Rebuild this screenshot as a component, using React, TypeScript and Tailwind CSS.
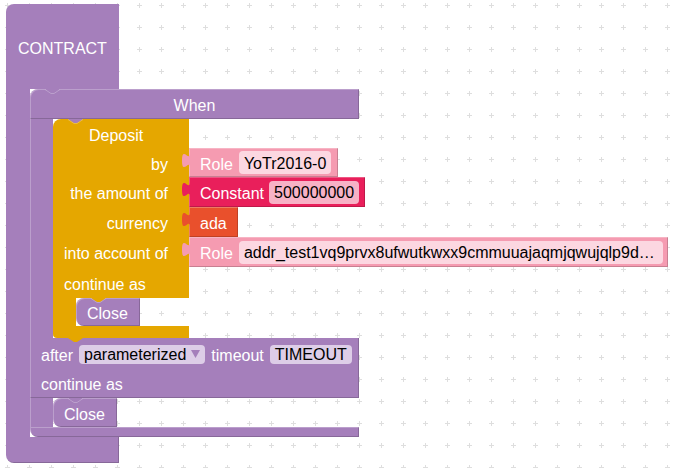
import React from "react";

// Blockly-style workspace: CONTRACT > When > Deposit

const edge = "shadow-[inset_1px_1px_0_rgba(255,255,255,0.25),inset_-1px_-1px_0_rgba(0,0,0,0.18)]";

function GridDots() {
  return (
    <svg className="absolute inset-0" width="676" height="468">
      <defs>
        <pattern id="grid" width="22" height="22" patternUnits="userSpaceOnUse">
          <path d="M5 5.5h5M7.5 3v5" stroke="#dedede" strokeWidth="1" />
        </pattern>
      </defs>
      <rect width="676" height="468" fill="url(#grid)" />
    </svg>
  );
}

// label text sits a little low in the block rows
function T({ children }: { children: React.ReactNode }) {
  return <span className="relative top-[2px]">{children}</span>;
}

// dent cut into a block's top edge, shows the parent colour
function Dent({ fill }: { fill: string }) {
  return (
    <svg className="absolute left-[15px] top-0" width="15" height="5" viewBox="0 0 15 5">
      <polygon points="0,0 6,4 9,4 15,0" fill={fill} />
      <polyline points="0,0.5 6,4.5 9,4.5 15,0.5" fill="none" stroke="rgba(255,255,255,0.25)" strokeWidth="1" />
    </svg>
  );
}

// puzzle tab on the left of a value block
function Tab({ fill }: { fill: string }) {
  return (
    <svg className="absolute left-[-8px] top-[5px]" width="9" height="15" viewBox="0 0 9 15">
      <path d="M9 0c0 10-8-8-8 7.5s8-2.5 8 7.5z" fill={fill} />
    </svg>
  );
}

function Field({ bg, children, className = "" }: { bg: string; children: React.ReactNode; className?: string }) {
  return (
    <span className={`flex items-center h-[23px] rounded-[4px] px-[5px] text-black whitespace-nowrap ${bg} ${className}`}>
      <span className="relative top-[1px]">{children}</span>
    </span>
  );
}

function Close({ dent }: { dent: string }) {
  return (
    <div className={`relative flex items-center w-[64px] bg-[#a57fbb] rounded-l-[8px] pl-[11px] ${edge}`}>
      <Dent fill={dent} />
      <T>Close</T>
    </div>
  );
}

function Deposit() {
  return (
    <div className="relative flex flex-col items-start">
      <div className="relative flex items-center w-[136px] h-[29px] bg-[#e5a700] rounded-tl-[8px] pl-[36px]">
        <Dent fill="#a57fbb" />
        <T>Deposit</T>
      </div>

      <div className="flex h-[29px]">
        <div className="flex items-center justify-end w-[136px] bg-[#e5a700] pr-[21px]"><T>by</T></div>
        <div className={`relative flex items-center gap-[6px] bg-[#f59bb1] pl-[11px] pr-[7px] ${edge}`}>
          <Tab fill="#f59bb1" />
          <T>Role</T>
          <Field bg="bg-[#fcd7e1]">YoTr2016-0</Field>
        </div>
      </div>

      <div className="flex h-[30px]">
        <div className="flex items-center justify-end w-[136px] bg-[#e5a700] pr-[21px]"><T>the amount of</T></div>
        <div className={`relative flex items-center gap-[5px] bg-[#e91f5b] pl-[11px] pr-[6px] ${edge}`}>
          <Tab fill="#e91f5b" />
          <T>Constant</T>
          <Field bg="bg-[#f7b2c6]">500000000</Field>
        </div>
      </div>

      <div className="flex h-[30px]">
        <div className="flex items-center justify-end w-[136px] bg-[#e5a700] pr-[21px]"><T>currency</T></div>
        <div className={`relative flex items-center w-[49px] bg-[#e9502c] pl-[11px] ${edge}`}>
          <Tab fill="#e9502c" />
          <T>ada</T>
        </div>
      </div>

      <div className="flex h-[30px]">
        <div className="flex items-center justify-end w-[136px] bg-[#e5a700] pr-[21px]"><T>into account of</T></div>
        <div className={`relative flex items-center gap-[6px] bg-[#f59bb1] pl-[11px] pr-[5px] ${edge}`}>
          <Tab fill="#f59bb1" />
          <T>Role</T>
          <Field bg="bg-[#fcd7e1]" className="w-[424px] overflow-hidden">
            addr_test1vq9prvx8ufwutkwxx9cmmuuajaqmjqwujqlp9d…
          </Field>
        </div>
      </div>

      <div className="flex items-center w-[136px] h-[31px] bg-[#e5a700] pl-[11px]"><T>continue as</T></div>

      <div className="flex h-[28px]">
        <div className="w-[23px] bg-[#e5a700]" />
        <Close dent="#e5a700" />
      </div>

      <div className="relative w-[136px] h-[12px] bg-[#e5a700] rounded-bl-[4px]">
        <svg className="absolute left-[15px] top-[12px]" width="15" height="4" viewBox="0 0 15 4">
          <polygon points="0,0 6,4 9,4 15,0" fill="#e5a700" />
        </svg>
      </div>
    </div>
  );
}

function When() {
  return (
    <div className="flex flex-col items-start">
      <div className={`relative flex items-center justify-center w-[329px] h-[30px] bg-[#a57fbb] rounded-tl-[8px] ${edge}`}>
        <Dent fill="#a57fbb" />
        <T>When</T>
      </div>

      <div className="flex">
        <div className="w-[23px] bg-[#a57fbb] shadow-[inset_1px_0_0_rgba(255,255,255,0.25)]" />
        <Deposit />
      </div>

      <div className="flex items-center gap-[6px] w-[329px] h-[30px] bg-[#a57fbb] pl-[11px] pt-[2px] shadow-[inset_1px_0_0_rgba(255,255,255,0.25),inset_-1px_0_0_rgba(0,0,0,0.18)]">
        <T>after</T>
        <span className="flex items-center gap-[5px] h-[19px] rounded-[4px] bg-[#ddcde7] pl-[5px] pr-[5px] text-black">
          <span className="relative top-[1px]">parameterized</span>
          <svg width="9" height="8" viewBox="0 0 9 8">
            <polygon points="0,0 9,0 4.5,8" fill="#a57fbb" />
          </svg>
        </span>
        <T>timeout</T>
        <span className="flex items-center h-[19px] rounded-[4px] bg-[#ddcde7] px-[5px] text-black">
          <span className="relative top-[1px]">TIMEOUT</span>
        </span>
      </div>

      <div className="flex items-center w-[329px] h-[30px] bg-[#a57fbb] pl-[11px] shadow-[inset_1px_0_0_rgba(255,255,255,0.25),inset_-1px_-1px_0_rgba(0,0,0,0.18)]">
        <T>continue as</T>
      </div>

      <div className="flex h-[29px]">
        <div className="w-[23px] bg-[#a57fbb] shadow-[inset_1px_0_0_rgba(255,255,255,0.25)]" />
        <Close dent="#a57fbb" />
      </div>

      <div className={`w-[329px] h-[10px] bg-[#a57fbb] rounded-bl-[8px] ${edge}`} />
    </div>
  );
}

export default function App() {
  return (
    <div className="relative w-[676px] h-[468px] overflow-hidden bg-white font-['Liberation_Sans',Arial,sans-serif] text-[16px] leading-none text-white">
      <GridDots />
      <div className="relative pl-[6px] pt-[4px]">
        <div className="flex flex-col items-start">
          <div className="flex items-center w-[113px] h-[85px] bg-[#a57fbb] rounded-tl-[8px] pl-[12px]">
            <T>CONTRACT</T>
          </div>
          <div className="flex">
            <div className="w-[24px] bg-[#a57fbb]" />
            <When />
          </div>
          <div className="w-[113px] h-[26px] bg-[#a57fbb] rounded-bl-[8px] shadow-[inset_-1px_-1px_0_rgba(0,0,0,0.18)]" />
        </div>
      </div>
    </div>
  );
}
